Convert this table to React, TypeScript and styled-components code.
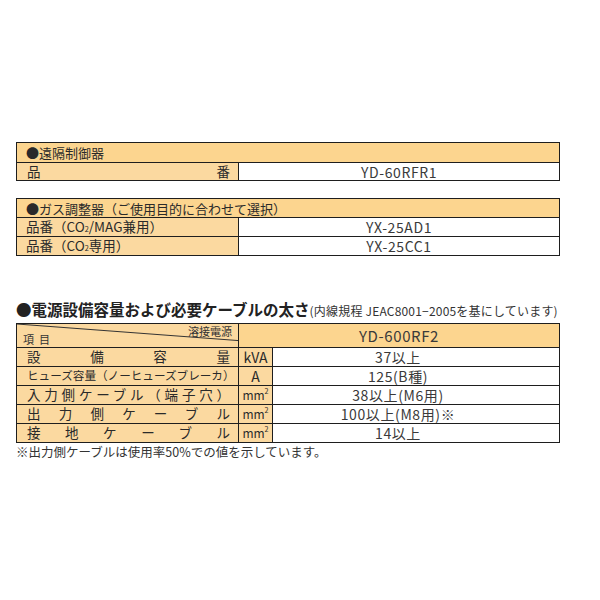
import React from "react";
import styled, { createGlobalStyle } from "styled-components";

const Global = createGlobalStyle`
  body {
    margin: 0;
    background: #fff;
    font-family: "Noto Sans CJK JP", "Noto Sans", sans-serif;
    color: #333;
  }
`;

const Page = styled.div`
  width: 544px;
  padding: 142px 40px 0 16px;
  display: flex;
  flex-direction: column;
`;

const Table = styled.table<{ $mb?: number }>`
  width: 544px;
  border-collapse: collapse;
  table-layout: fixed;
  margin-bottom: ${(p) => p.$mb ?? 0}px;
`;

const Row = styled.tr<{ $h: number }>`
  height: ${(p) => p.$h}px;
`;

const Cell = styled.td`
  border: 1px solid #1e1e1e;
  padding: 0;
  line-height: 1;
  white-space: nowrap;
`;

const HeadCell = styled(Cell)`
  background: #fcd58f;
  padding: 0 9px;
  font-size: 13px;
  color: #2a2a2a;
`;

const LabelCell = styled(Cell)<{ $fs?: number }>`
  background: #fbd9a0;
  padding: 0 8px 0 10px;
  font-size: ${(p) => p.$fs ?? 13.5}px;
  text-align: ${(p) => (p.$fs ? "left" : "justify")};
  text-align-last: ${(p) => (p.$fs ? "left" : "justify")};
  color: #2a2a2a;
`;

const PlainLabel = styled(Cell)`
  background: #fbd9a0;
  padding: 0 9px;
  font-size: 13.5px;
  color: #2a2a2a;
`;

const UnitCell = styled(Cell)<{ $fs?: number }>`
  background: #fbd9a0;
  text-align: center;
  font-size: ${(p) => p.$fs ?? 14}px;
  color: #2a2a2a;
`;

const ValueCell = styled(Cell)<{ $pr?: number }>`
  background: #fff;
  text-align: center;
  font-size: 14px;
  letter-spacing: 0.6px;
  padding-right: ${(p) => p.$pr ?? 0}px;
  color: #3a3a3a;
`;

const ModelCell = styled(Cell)`
  background: #fcd58f;
  text-align: center;
  font-size: 15px;
  letter-spacing: 0.6px;
  color: #3a3a3a;
`;

const DiagCell = styled(Cell)`
  background: #fbd9a0;
  position: relative;
`;

const Diag = styled.svg`
  position: absolute;
  inset: 0;
  width: 100%;
  height: 100%;
`;

const DiagTop = styled.span`
  position: absolute;
  top: 2px;
  right: 6px;
  font-size: 11px;
  color: #333;
`;

const DiagBottom = styled.span`
  position: absolute;
  bottom: 2px;
  left: 6px;
  font-size: 11px;
  letter-spacing: 5px;
  color: #333;
`;

const Title = styled.div`
  display: flex;
  align-items: baseline;
  white-space: nowrap;
  margin: 43px 0 2px;
  line-height: 20px;
  color: #222;
`;

const TitleMain = styled.span`
  font-size: 15.5px;
  font-weight: 700;
`;

const TitleSub = styled.span`
  font-size: 12px;
  letter-spacing: 0.2px;
  color: #333;
`;

const Note = styled.div`
  font-size: 12.5px;
  line-height: 16px;
  margin-top: 1px;
  color: #333;
`;

const Sub = styled.sub`
  font-size: 0.55em;
  vertical-align: baseline;
  position: relative;
  top: 0;
`;

const Sup = styled.sup`
  font-size: 0.6em;
  vertical-align: top;
  position: relative;
  top: -1px;
`;

const mm2 = (
  <>
    mm<Sup>2</Sup>
  </>
);

const elecRows: { label: React.ReactNode; fs?: number; unit: React.ReactNode; ufs?: number; value: string }[] = [
  { label: "設備容量", unit: "kVA", value: "37以上" },
  { label: "ヒューズ容量（ノーヒューズブレーカ）", fs: 11.6, unit: "A", value: "125(B種)" },
  { label: "入力側ケーブル（端子穴）", unit: mm2, ufs: 12, value: "38以上(M6用)" },
  { label: "出力側ケーブル", unit: mm2, ufs: 12, value: "100以上(M8用)※" },
  { label: "接地ケーブル", unit: mm2, ufs: 12, value: "14以上" },
];

export default function App() {
  return (
    <>
      <Global />
      <Page>
        <Table $mb={17}>
          <colgroup>
            <col style={{ width: 222 }} />
            <col />
          </colgroup>
          <tbody>
            <Row $h={20}>
              <HeadCell colSpan={2}>●遠隔制御器</HeadCell>
            </Row>
            <Row $h={18}>
              <LabelCell>品番</LabelCell>
              <ValueCell>YD-60RFR1</ValueCell>
            </Row>
          </tbody>
        </Table>

        <Table>
          <colgroup>
            <col style={{ width: 222 }} />
            <col />
          </colgroup>
          <tbody>
            <Row $h={19}>
              <HeadCell colSpan={2}>●ガス調整器（ご使用目的に合わせて選択）</HeadCell>
            </Row>
            <Row $h={19}>
              <PlainLabel>
                品番（CO<Sub>2</Sub>/MAG兼用）
              </PlainLabel>
              <ValueCell>YX-25AD1</ValueCell>
            </Row>
            <Row $h={19}>
              <PlainLabel>
                品番（CO<Sub>2</Sub>専用）
              </PlainLabel>
              <ValueCell>YX-25CC1</ValueCell>
            </Row>
          </tbody>
        </Table>

        <Title>
          <TitleMain>●電源設備容量および必要ケーブルの太さ</TitleMain>
          <TitleSub>(内線規程 JEAC8001−2005を基にしています)</TitleSub>
        </Title>

        <Table>
          <colgroup>
            <col style={{ width: 222 }} />
            <col style={{ width: 34 }} />
            <col />
          </colgroup>
          <tbody>
            <Row $h={24}>
              <DiagCell>
                <Diag viewBox="0 0 100 100" preserveAspectRatio="none">
                  <line x1="0" y1="0" x2="100" y2="72" stroke="#333" strokeWidth="1" vectorEffect="non-scaling-stroke" />
                </Diag>
                <DiagTop>溶接電源</DiagTop>
                <DiagBottom>項目</DiagBottom>
              </DiagCell>
              <ModelCell colSpan={2}>YD-600RF2</ModelCell>
            </Row>
            {elecRows.map((r, i) => (
              <Row $h={19} key={i}>
                <LabelCell $fs={r.fs}>{r.label}</LabelCell>
                <UnitCell $fs={r.ufs}>{r.unit}</UnitCell>
                <ValueCell $pr={36}>{r.value}</ValueCell>
              </Row>
            ))}
          </tbody>
        </Table>
        <Note>※出力側ケーブルは使用率50%での値を示しています。</Note>
      </Page>
    </>
  );
}
